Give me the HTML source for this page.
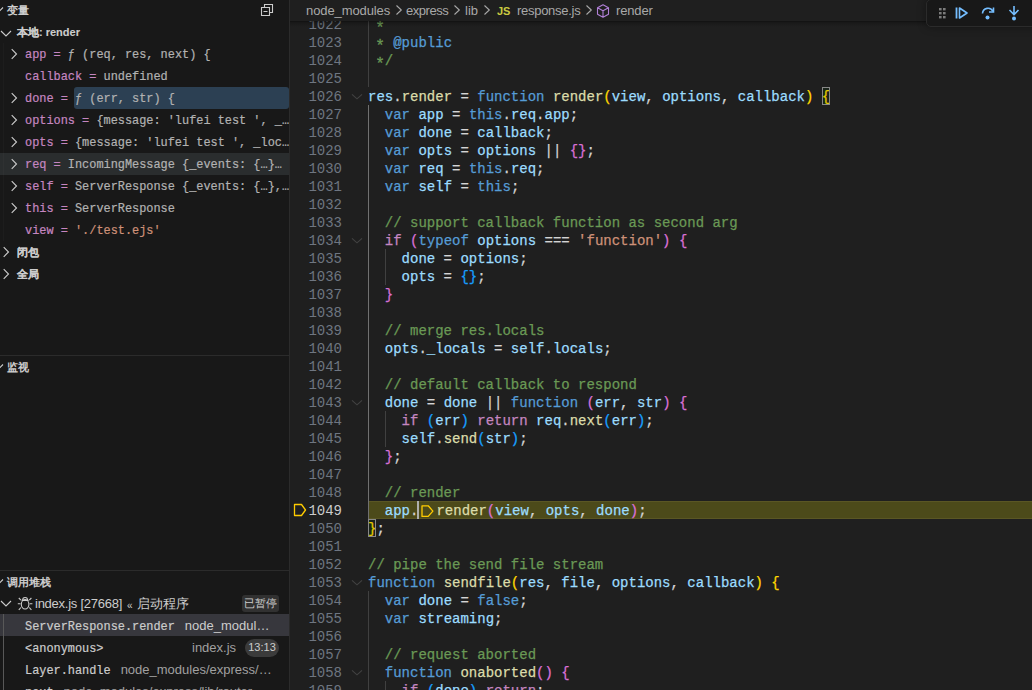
<!DOCTYPE html>
<html><head><meta charset="utf-8"><style>
*{margin:0;padding:0;box-sizing:border-box}
html,body{width:1032px;height:690px;overflow:hidden;background:#1f1f1f}
body{position:relative;font-family:"Liberation Sans",sans-serif;color:#cccccc}
.abs{position:absolute}
#side{position:absolute;left:0;top:0;width:289px;height:690px;background:#181818;overflow:hidden}
#sash{position:absolute;left:289px;top:0;width:1px;height:690px;background:#2b2b2b}
#editor{position:absolute;left:290px;top:0;width:742px;height:690px;background:#1f1f1f;overflow:hidden}
.row{position:absolute;height:22px;line-height:22px;white-space:nowrap;font-size:13px}
.hdr{font-size:11px;font-weight:bold;color:#cccccc}
.sb{-webkit-text-stroke:0.1px currentColor}
.mono{font-family:"Liberation Mono",monospace;font-size:11.9px;-webkit-text-stroke:0.2px currentColor}
.nm{color:#c586c0}
.vl{color:#b2b2b2}
.st{color:#ce9178}
.code{position:absolute;left:78px;font-family:"Liberation Mono",monospace;font-size:14px;line-height:18px;height:18px;padding-top:1px;-webkit-text-stroke:0.25px currentColor;white-space:pre;color:#cccccc}
.ln{position:absolute;left:0;width:52px;text-align:right;font-family:"Liberation Mono",monospace;font-size:14px;line-height:18px;height:18px;padding-top:1px;color:#6e7681}
.ln.act{color:#cccccc}
.fold{position:absolute;left:59px}
.guide{position:absolute;width:1px;background:#404040}
.c{color:#6a9955}.k{color:#569cd6}.kc{color:#c586c0}.f{color:#dcdcaa}.v{color:#9cdcfe}.s{color:#ce9178}.o{color:#d4d4d4}
.b1{color:#ffd700}.b2{color:#da70d6}.b3{color:#179fff}
.bm{}
.bmbox{position:absolute;width:8.4px;height:18px;border:1px solid #888888;background:#0064001a}
.ast{display:inline-block;transform:translateY(3px) scale(1.15)}
.dec{display:inline-block;width:18px;height:18px;vertical-align:top}
.dec svg{display:block}
#hl{position:absolute;left:78px;top:501px;width:664px;height:18px;background:#4c4a1a;border-top:1px solid #5a5624;border-bottom:1px solid #5a5624}
#cursor{position:absolute;left:127px;top:501px;width:2px;height:18px;background:#aeafad}
#bc{position:absolute;left:0;top:0;width:742px;height:21px;background:#1f1f1f;z-index:5;font-size:13px;line-height:22px;color:#a9a9a9;white-space:nowrap}
#bc .sep{margin:0 4px;color:#a9a9a9}
#bc .js{color:#cbcb41;font-weight:bold;font-size:11px}
#bc .cube{margin-right:4px}
#gicon{position:absolute;left:0px;top:501px}
#shd{position:absolute;left:0;top:21px;width:742px;height:6px;background:linear-gradient(to bottom,rgba(0,0,0,0.45),rgba(0,0,0,0.2) 30%,rgba(0,0,0,0))}
#tb{position:absolute;left:636px;top:-1px;width:120px;height:28px;background:#181818;border:1px solid #2b2b2b;border-radius:5px;z-index:6;box-shadow:0 0 8px #0000005c}
</style></head><body>
<div id="side"><div class="abs" style="left:0;top:153px;width:289px;height:22px;background:#2a2d2e"></div><div class="abs" style="left:74px;top:87px;width:215px;height:22px;background:#2c4053;border-radius:3px"></div><svg class="abs" style="left:-9px;top:1px" width="16" height="16" viewBox="0 0 16 16"><path d="M4 6.5l4 4 4-4" fill="none" stroke="#cccccc" stroke-width="1.1"/></svg><div class="row hdr" style="top:-1px;left:7px">变量</div><svg class="abs" style="left:259px;top:2px" width="16" height="16" viewBox="0 0 16 16"><path d="M5.5 5.5v-3h8v8h-3M2.5 5.5h8v8h-8z M4.5 9.5h4" fill="none" stroke="#cccccc" stroke-width="1.1"/></svg><svg class="abs" style="left:-2px;top:25px" width="16" height="16" viewBox="0 0 16 16"><path d="M3 6l5 5 5-5" fill="none" stroke="#cccccc" stroke-width="1.1"/></svg><div class="row sb" style="top:21px;left:17px;font-size:11px;font-weight:bold">本地: render</div><svg class="abs" style="left:6px;top:46px" width="16" height="16" viewBox="0 0 16 16"><path d="M5.7 3.2L10.5 8L5.7 12.8" fill="none" stroke="#cccccc" stroke-width="1.1"/></svg><div class="row mono" style="top:44px;left:25px"><span class="nm">app</span><span class="nm"> = </span><span class="vl">ƒ (req, res, next) {</span></div><div class="row mono" style="top:66px;left:25px"><span class="nm">callback</span><span class="nm"> = </span><span class="vl">undefined</span></div><svg class="abs" style="left:6px;top:90px" width="16" height="16" viewBox="0 0 16 16"><path d="M5.7 3.2L10.5 8L5.7 12.8" fill="none" stroke="#cccccc" stroke-width="1.1"/></svg><div class="row mono" style="top:88px;left:25px"><span class="nm">done</span><span class="nm"> = </span><span class="vl">ƒ (err, str) {</span></div><svg class="abs" style="left:6px;top:112px" width="16" height="16" viewBox="0 0 16 16"><path d="M5.7 3.2L10.5 8L5.7 12.8" fill="none" stroke="#cccccc" stroke-width="1.1"/></svg><div class="row mono" style="top:110px;left:25px"><span class="nm">options</span><span class="nm"> = </span><span class="vl">{message: &#x27;lufei test &#x27;, _…</span></div><svg class="abs" style="left:6px;top:134px" width="16" height="16" viewBox="0 0 16 16"><path d="M5.7 3.2L10.5 8L5.7 12.8" fill="none" stroke="#cccccc" stroke-width="1.1"/></svg><div class="row mono" style="top:132px;left:25px"><span class="nm">opts</span><span class="nm"> = </span><span class="vl">{message: &#x27;lufei test &#x27;, _loc…</span></div><svg class="abs" style="left:6px;top:156px" width="16" height="16" viewBox="0 0 16 16"><path d="M5.7 3.2L10.5 8L5.7 12.8" fill="none" stroke="#cccccc" stroke-width="1.1"/></svg><div class="row mono" style="top:154px;left:25px"><span class="nm">req</span><span class="nm"> = </span><span class="vl">IncomingMessage {_events: {…}…</span></div><svg class="abs" style="left:6px;top:178px" width="16" height="16" viewBox="0 0 16 16"><path d="M5.7 3.2L10.5 8L5.7 12.8" fill="none" stroke="#cccccc" stroke-width="1.1"/></svg><div class="row mono" style="top:176px;left:25px"><span class="nm">self</span><span class="nm"> = </span><span class="vl">ServerResponse {_events: {…},…</span></div><svg class="abs" style="left:6px;top:200px" width="16" height="16" viewBox="0 0 16 16"><path d="M5.7 3.2L10.5 8L5.7 12.8" fill="none" stroke="#cccccc" stroke-width="1.1"/></svg><div class="row mono" style="top:198px;left:25px"><span class="nm">this</span><span class="nm"> = </span><span class="vl">ServerResponse</span></div><div class="row mono" style="top:220px;left:25px"><span class="nm">view</span><span class="nm"> = </span><span class="st">&#x27;./test.ejs&#x27;</span></div><div class="abs" style="left:3px;top:43px;width:1px;height:198px;background:rgba(255,255,255,0.025)"></div><svg class="abs" style="left:-2px;top:244px" width="16" height="16" viewBox="0 0 16 16"><path d="M5.7 3.2L10.5 8L5.7 12.8" fill="none" stroke="#cccccc" stroke-width="1.1"/></svg><div class="row sb" style="top:241px;left:17px;font-size:11px;font-weight:bold">闭包</div><svg class="abs" style="left:-2px;top:266px" width="16" height="16" viewBox="0 0 16 16"><path d="M5.7 3.2L10.5 8L5.7 12.8" fill="none" stroke="#cccccc" stroke-width="1.1"/></svg><div class="row sb" style="top:263px;left:17px;font-size:11px;font-weight:bold">全局</div><div class="abs" style="left:0;top:355px;width:289px;height:1px;background:#2b2b2b"></div><svg class="abs" style="left:-9px;top:358px" width="16" height="16" viewBox="0 0 16 16"><path d="M4 6.5l4 4 4-4" fill="none" stroke="#cccccc" stroke-width="1.1"/></svg><div class="row hdr" style="top:356px;left:7px">监视</div><div class="abs" style="left:0;top:570px;width:289px;height:1px;background:#2b2b2b"></div><svg class="abs" style="left:-9px;top:573px" width="16" height="16" viewBox="0 0 16 16"><path d="M4 6.5l4 4 4-4" fill="none" stroke="#cccccc" stroke-width="1.1"/></svg><div class="row hdr" style="top:571px;left:7px">调用堆栈</div><svg class="abs" style="left:-2px;top:595px" width="16" height="16" viewBox="0 0 16 16"><path d="M3 6l5 5 5-5" fill="none" stroke="#cccccc" stroke-width="1.1"/></svg><svg class="abs" style="left:14px;top:592px" width="24" height="22" viewBox="0 0 24 22"><g fill="none" stroke="#cccccc" stroke-width="1.1"><path d="M8.6 8.4A2.5 2.9 0 0 1 13.6 8.4"/><ellipse cx="11.1" cy="12.3" rx="3.8" ry="4.7"/><path d="M7.6 8.4H14.6M4.8 6L6.9 8.1M17.4 6L15.3 8.1M3.8 11.8H6.5M15.7 11.8H18.4M4.8 17.8L6.9 15.5M17.4 17.8L15.3 15.5"/></g></svg><div class="row" style="top:593px;left:35px;font-size:13px;letter-spacing:-0.25px">index.js [27668]</div><div class="row" style="top:595px;left:127px;font-size:10px">«</div><div class="row" style="top:593px;left:137px;font-size:13px">启动程序</div><div class="abs" style="left:242px;top:595px;width:37px;height:17px;background:#313131;border-radius:3px;font-size:11px;line-height:17px;text-align:center;color:#cccccc">已暂停</div><div class="abs" style="left:0;top:614px;width:289px;height:22px;background:#37373d"></div><div class="abs" style="left:3px;top:614px;width:1px;height:76px;background:#585858"></div><div class="row" style="top:615px;left:25px"><span class="mono" style="color:#cccccc">ServerResponse.render</span><span style="color:#cccccc;margin-left:10px;font-size:13px">node_modul…</span></div><div class="row" style="top:637px;left:25px"><span class="mono" style="color:#cccccc">&lt;anonymous&gt;</span></div><div class="abs" style="left:192px;top:637px;height:22px;line-height:22px;font-size:13px;color:#a0a0a0">index.js</div><div class="abs" style="left:245px;top:639px;width:34px;height:18px;background:#3b3b3b;border-radius:9px;font-size:11px;line-height:17px;text-align:center;color:#cccccc">13:13</div><div class="row" style="top:659px;left:25px"><span class="mono" style="color:#cccccc">Layer.handle</span><span style="color:#a0a0a0;margin-left:10px;font-size:13px">node_modules/express/…</span></div><div class="row" style="top:681px;left:25px"><span class="mono" style="color:#cccccc">next</span><span style="color:#a0a0a0;margin-left:10px;font-size:13px">node_modules/express/lib/router…</span></div></div>
<div id="sash"></div>
<div id="editor">
<div id="hl"></div>
<div class="guide" style="left:78.0px;top:21px;height:66px;background:#404040"></div><div class="guide" style="left:78.0px;top:105px;height:414px;background:#707070"></div><div class="guide" style="left:94.8px;top:249px;height:36px;background:#404040"></div><div class="guide" style="left:94.8px;top:411px;height:36px;background:#404040"></div><div class="guide" style="left:78.0px;top:591px;height:108px;background:#404040"></div><div class="guide" style="left:94.8px;top:681px;height:18px;background:#404040"></div>
<div class="ln" style="top:15px">1022</div><div class="code" style="top:15px"><span class="c"> <span class="ast">*</span></span></div><div class="ln" style="top:33px">1023</div><div class="code" style="top:33px"><span class="c"> <span class="ast">*</span> </span><span class="k">@public</span></div><div class="ln" style="top:51px">1024</div><div class="code" style="top:51px"><span class="c"> <span class="ast">*</span>/</span></div><div class="ln" style="top:69px">1025</div><div class="code" style="top:69px"></div><div class="ln" style="top:87px">1026</div><div class="code" style="top:87px"><span class="v">res</span><span class="o">.</span><span class="f">render</span><span class="o"> = </span><span class="k">function</span><span class="o"> </span><span class="f">render</span><span class="b1">(</span><span class="v">view</span><span class="o">, </span><span class="v">options</span><span class="o">, </span><span class="v">callback</span><span class="b1">)</span><span class="o"> </span><span class="b1 bm">{</span></div><svg class="fold" style="top:87px" width="16" height="18" viewBox="0 0 16 18"><path d="M3 7.3L8 11.8L13 7.3" fill="none" stroke="#424242" stroke-width="1.1"/></svg><div class="ln" style="top:105px">1027</div><div class="code" style="top:105px"><span class="o">  </span><span class="k">var</span><span class="o"> </span><span class="v">app</span><span class="o"> = </span><span class="k">this</span><span class="o">.</span><span class="v">req</span><span class="o">.</span><span class="v">app</span><span class="o">;</span></div><div class="ln" style="top:123px">1028</div><div class="code" style="top:123px"><span class="o">  </span><span class="k">var</span><span class="o"> </span><span class="v">done</span><span class="o"> = </span><span class="v">callback</span><span class="o">;</span></div><div class="ln" style="top:141px">1029</div><div class="code" style="top:141px"><span class="o">  </span><span class="k">var</span><span class="o"> </span><span class="v">opts</span><span class="o"> = </span><span class="v">options</span><span class="o"> || </span><span class="b2">{}</span><span class="o">;</span></div><div class="ln" style="top:159px">1030</div><div class="code" style="top:159px"><span class="o">  </span><span class="k">var</span><span class="o"> </span><span class="v">req</span><span class="o"> = </span><span class="k">this</span><span class="o">.</span><span class="v">req</span><span class="o">;</span></div><div class="ln" style="top:177px">1031</div><div class="code" style="top:177px"><span class="o">  </span><span class="k">var</span><span class="o"> </span><span class="v">self</span><span class="o"> = </span><span class="k">this</span><span class="o">;</span></div><div class="ln" style="top:195px">1032</div><div class="code" style="top:195px"></div><div class="ln" style="top:213px">1033</div><div class="code" style="top:213px"><span class="c">  // support callback function as second arg</span></div><div class="ln" style="top:231px">1034</div><div class="code" style="top:231px"><span class="o">  </span><span class="kc">if</span><span class="o"> </span><span class="b2">(</span><span class="k">typeof</span><span class="o"> </span><span class="v">options</span><span class="o"> === </span><span class="s">&#x27;function&#x27;</span><span class="b2">)</span><span class="o"> </span><span class="b2">{</span></div><svg class="fold" style="top:231px" width="16" height="18" viewBox="0 0 16 18"><path d="M3 7.3L8 11.8L13 7.3" fill="none" stroke="#424242" stroke-width="1.1"/></svg><div class="ln" style="top:249px">1035</div><div class="code" style="top:249px"><span class="o">    </span><span class="v">done</span><span class="o"> = </span><span class="v">options</span><span class="o">;</span></div><div class="ln" style="top:267px">1036</div><div class="code" style="top:267px"><span class="o">    </span><span class="v">opts</span><span class="o"> = </span><span class="b3">{}</span><span class="o">;</span></div><div class="ln" style="top:285px">1037</div><div class="code" style="top:285px"><span class="o">  </span><span class="b2">}</span></div><div class="ln" style="top:303px">1038</div><div class="code" style="top:303px"></div><div class="ln" style="top:321px">1039</div><div class="code" style="top:321px"><span class="c">  // merge res.locals</span></div><div class="ln" style="top:339px">1040</div><div class="code" style="top:339px"><span class="o">  </span><span class="v">opts</span><span class="o">.</span><span class="v">_locals</span><span class="o"> = </span><span class="v">self</span><span class="o">.</span><span class="v">locals</span><span class="o">;</span></div><div class="ln" style="top:357px">1041</div><div class="code" style="top:357px"></div><div class="ln" style="top:375px">1042</div><div class="code" style="top:375px"><span class="c">  // default callback to respond</span></div><div class="ln" style="top:393px">1043</div><div class="code" style="top:393px"><span class="o">  </span><span class="v">done</span><span class="o"> = </span><span class="v">done</span><span class="o"> || </span><span class="k">function</span><span class="o"> </span><span class="b2">(</span><span class="v">err</span><span class="o">, </span><span class="v">str</span><span class="b2">)</span><span class="o"> </span><span class="b2">{</span></div><svg class="fold" style="top:393px" width="16" height="18" viewBox="0 0 16 18"><path d="M3 7.3L8 11.8L13 7.3" fill="none" stroke="#424242" stroke-width="1.1"/></svg><div class="ln" style="top:411px">1044</div><div class="code" style="top:411px"><span class="o">    </span><span class="kc">if</span><span class="o"> </span><span class="b3">(</span><span class="v">err</span><span class="b3">)</span><span class="o"> </span><span class="kc">return</span><span class="o"> </span><span class="v">req</span><span class="o">.</span><span class="f">next</span><span class="b3">(</span><span class="v">err</span><span class="b3">)</span><span class="o">;</span></div><div class="ln" style="top:429px">1045</div><div class="code" style="top:429px"><span class="o">    </span><span class="v">self</span><span class="o">.</span><span class="f">send</span><span class="b3">(</span><span class="v">str</span><span class="b3">)</span><span class="o">;</span></div><div class="ln" style="top:447px">1046</div><div class="code" style="top:447px"><span class="o">  </span><span class="b2">}</span><span class="o">;</span></div><div class="ln" style="top:465px">1047</div><div class="code" style="top:465px"></div><div class="ln" style="top:483px">1048</div><div class="code" style="top:483px"><span class="c">  // render</span></div><div class="ln act" style="top:501px">1049</div><div class="code" style="top:501px"><span class="o">  </span><span class="v">app</span><span class="o">.</span><span class="dec"><svg width="18" height="18" viewBox="0 0 18 18"><path d="M4 3.8H10.2L14.9 9.1L10.2 14.4H4Z" fill="none" stroke="#ffcc00" stroke-width="1.3" stroke-linejoin="round"/></svg></span><span class="f">render</span><span class="b2">(</span><span class="v">view</span><span class="o">, </span><span class="v">opts</span><span class="o">, </span><span class="v">done</span><span class="b2">)</span><span class="o">;</span></div><div class="ln" style="top:519px">1050</div><div class="code" style="top:519px"><span class="b1 bm">}</span><span class="o">;</span></div><div class="ln" style="top:537px">1051</div><div class="code" style="top:537px"></div><div class="ln" style="top:555px">1052</div><div class="code" style="top:555px"><span class="c">// pipe the send file stream</span></div><div class="ln" style="top:573px">1053</div><div class="code" style="top:573px"><span class="k">function</span><span class="o"> </span><span class="f">sendfile</span><span class="b1">(</span><span class="v">res</span><span class="o">, </span><span class="v">file</span><span class="o">, </span><span class="v">options</span><span class="o">, </span><span class="v">callback</span><span class="b1">)</span><span class="o"> </span><span class="b1">{</span></div><svg class="fold" style="top:573px" width="16" height="18" viewBox="0 0 16 18"><path d="M3 7.3L8 11.8L13 7.3" fill="none" stroke="#424242" stroke-width="1.1"/></svg><div class="ln" style="top:591px">1054</div><div class="code" style="top:591px"><span class="o">  </span><span class="k">var</span><span class="o"> </span><span class="v">done</span><span class="o"> = </span><span class="k">false</span><span class="o">;</span></div><div class="ln" style="top:609px">1055</div><div class="code" style="top:609px"><span class="o">  </span><span class="k">var</span><span class="o"> </span><span class="v">streaming</span><span class="o">;</span></div><div class="ln" style="top:627px">1056</div><div class="code" style="top:627px"></div><div class="ln" style="top:645px">1057</div><div class="code" style="top:645px"><span class="c">  // request aborted</span></div><div class="ln" style="top:663px">1058</div><div class="code" style="top:663px"><span class="o">  </span><span class="k">function</span><span class="o"> </span><span class="f">onaborted</span><span class="b2">()</span><span class="o"> </span><span class="b2">{</span></div><svg class="fold" style="top:663px" width="16" height="18" viewBox="0 0 16 18"><path d="M3 7.3L8 11.8L13 7.3" fill="none" stroke="#424242" stroke-width="1.1"/></svg><div class="ln" style="top:681px">1059</div><div class="code" style="top:681px"><span class="o">    </span><span class="kc">if</span><span class="o"> </span><span class="b3">(</span><span class="v">done</span><span class="b3">)</span><span class="o"> </span><span class="kc">return</span><span class="o">;</span></div>
<div id="cursor"></div>
<svg id="gicon" width="20" height="18" viewBox="0 0 20 18"><path d="M4.5 3.5H11.5L15.5 9L11.5 14.5H4.5Z" fill="none" stroke="#ffcc00" stroke-width="1.3" stroke-linejoin="round"/></svg><div class="bmbox" style="left:78px;top:519px"></div><div class="bmbox" style="left:532px;top:87px"></div>
<div id="bc"><span class="abs" style="left:16px;letter-spacing:-0.1px">node_modules</span><svg class="abs" style="left:101px;top:2px" width="16" height="16" viewBox="0 0 16 16"><path d="M5.5 3.5l4.8 4.5-4.8 4.5" fill="none" stroke="#a9a9a9" stroke-width="1.1"/></svg><span class="abs" style="left:116px;letter-spacing:-0.45px">express</span><svg class="abs" style="left:159px;top:2px" width="16" height="16" viewBox="0 0 16 16"><path d="M5.5 3.5l4.8 4.5-4.8 4.5" fill="none" stroke="#a9a9a9" stroke-width="1.1"/></svg><span class="abs" style="left:175px">lib</span><svg class="abs" style="left:189px;top:2px" width="16" height="16" viewBox="0 0 16 16"><path d="M5.5 3.5l4.8 4.5-4.8 4.5" fill="none" stroke="#a9a9a9" stroke-width="1.1"/></svg><span class="abs js" style="left:207px">JS</span><span class="abs" style="left:227px;letter-spacing:-0.28px">response.js</span><svg class="abs" style="left:291px;top:2px" width="16" height="16" viewBox="0 0 16 16"><path d="M5.5 3.5l4.8 4.5-4.8 4.5" fill="none" stroke="#a9a9a9" stroke-width="1.1"/></svg><svg class="abs" style="left:305px;top:3px" width="16" height="16" viewBox="0 0 16 16"><path d="M8 1.8l5.5 3v6.4L8 14.2 2.5 11.2V4.8z M2.5 4.8L8 7.8l5.5-3 M8 7.8v6.4" fill="none" stroke="#b180d7" stroke-width="1.1" stroke-linejoin="round"/></svg><span class="abs" style="left:326px;letter-spacing:-0.15px">render</span></div>
<div id="tb">
<svg class="abs" style="left:12px;top:7px" width="8" height="12" viewBox="0 0 8 12"><g fill="#7c7c7c"><rect x="0" y="1" width="2.6" height="2.4"/><rect x="4" y="1" width="2.6" height="2.4"/><rect x="0" y="5" width="2.6" height="2.4"/><rect x="4" y="5" width="2.6" height="2.4"/><rect x="0" y="9" width="2.6" height="2.4"/><rect x="4" y="9" width="2.6" height="2.4"/></g></svg>
<svg class="abs" style="left:27px;top:5px" width="16" height="16" viewBox="0 0 16 16"><path d="M2.5 2.5v11" stroke="#75beff" stroke-width="1.8"/><path d="M5.5 3l7.5 5-7.5 5z" fill="none" stroke="#75beff" stroke-width="1.6" stroke-linejoin="round"/></svg>
<svg class="abs" style="left:53px;top:5px" width="16" height="16" viewBox="0 0 16 16"><path d="M2.5 8.5a5.5 5.5 0 0 1 10.5-2" fill="none" stroke="#75beff" stroke-width="1.6"/><path d="M13.5 2.5v4.5H9" fill="none" stroke="#75beff" stroke-width="1.6"/><circle cx="7.5" cy="12.5" r="2" fill="#75beff"/></svg>
<svg class="abs" style="left:79px;top:5px" width="16" height="16" viewBox="0 0 16 16"><path d="M8 1v8M3.5 5l4.5 4.5 4.5-4.5" fill="none" stroke="#75beff" stroke-width="1.6"/><circle cx="8" cy="13.5" r="2" fill="#75beff"/></svg>
</div>
<div id="shd"></div>
</div>
</body></html>
